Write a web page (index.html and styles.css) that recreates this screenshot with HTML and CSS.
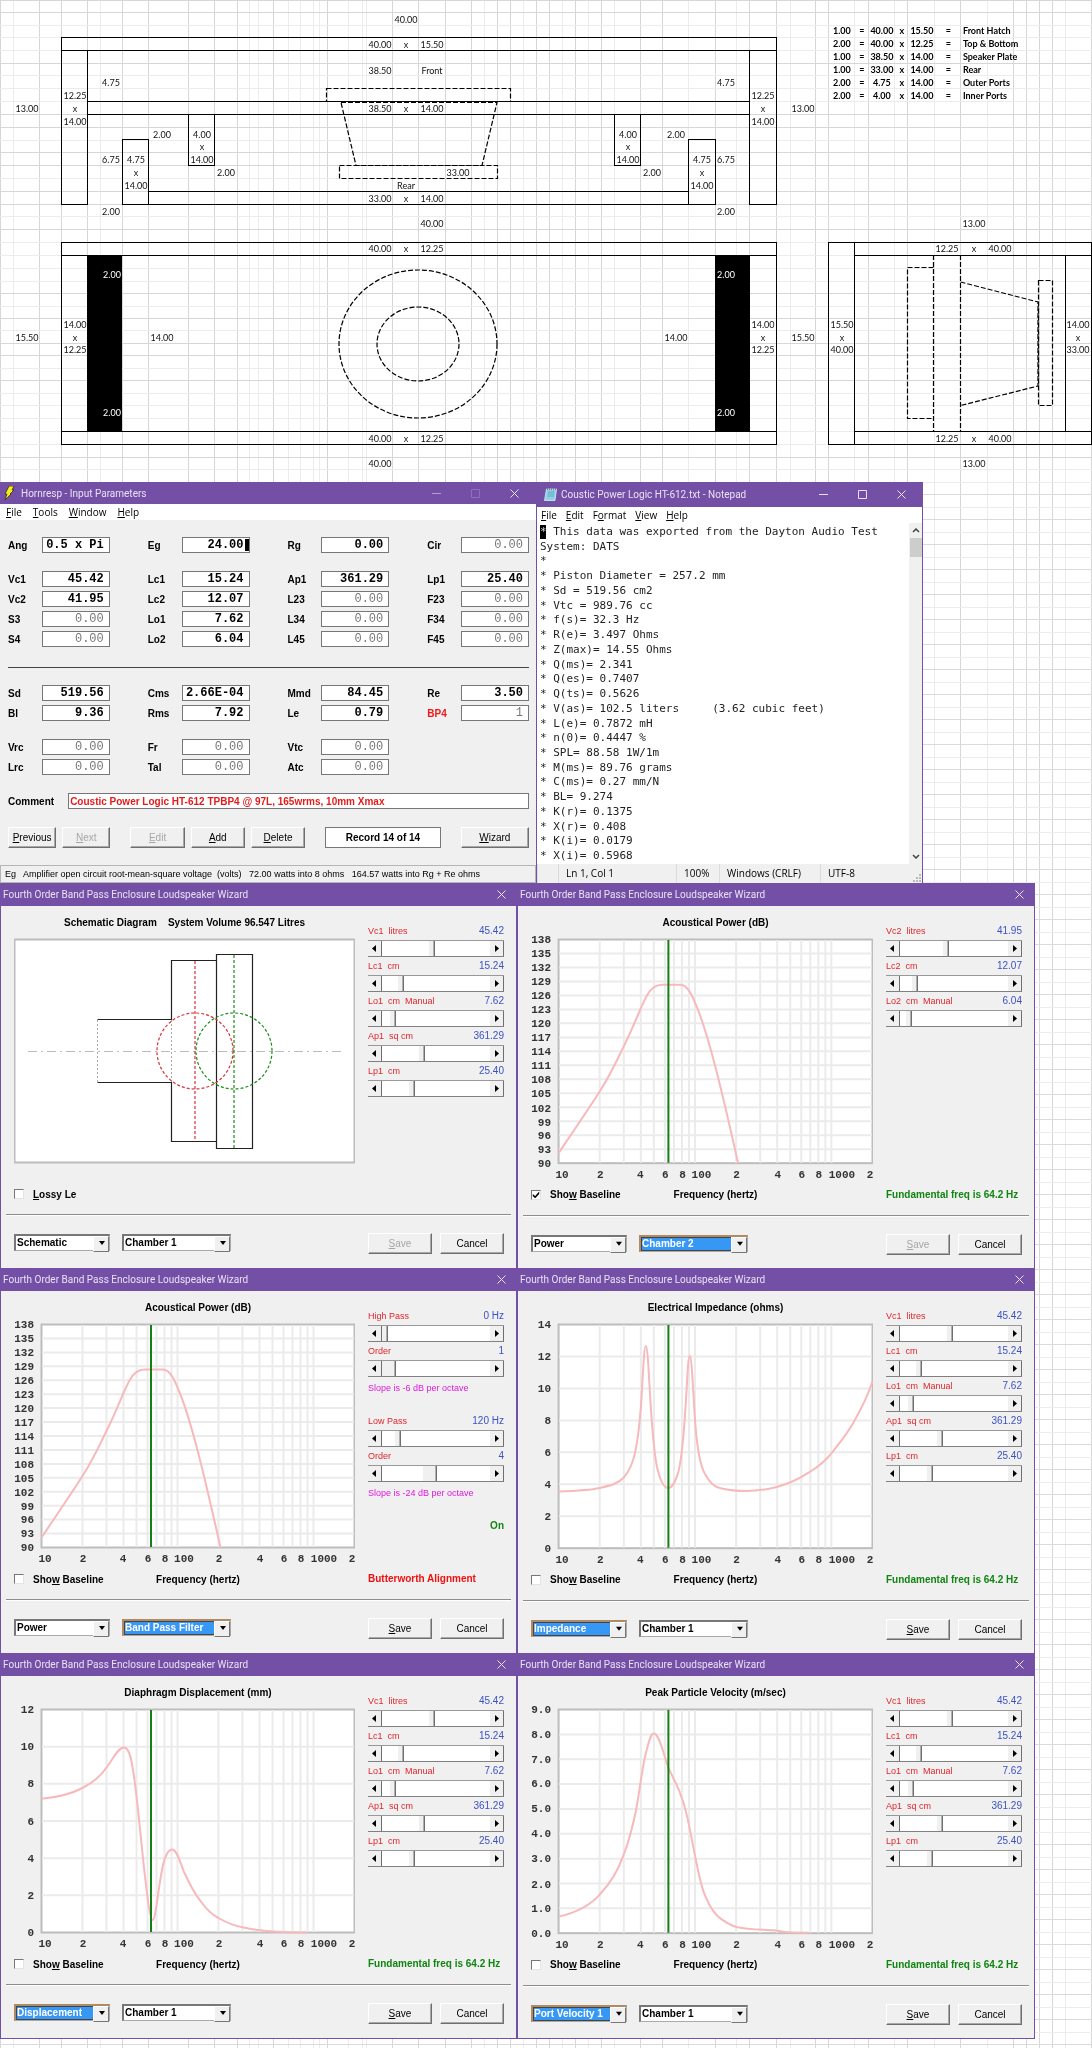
FILE: index.html
```html
<!DOCTYPE html>
<html lang="en">
<head>
<meta charset="utf-8">
<title>Coustic Power Logic HT-612 enclosure design</title>
<link rel="stylesheet" href="styles.css">
</head>
<body>
<svg class="defs" aria-hidden="true">
  <defs>
    <path id="freq-lines" d="M68.5 7V229M92.5 7V229M109.5 7V229M122.5 7V229M133.5 7V229M142.5 7V229M150.5 7V229M157.5 7V229M163.5 7V229M204.5 7V229M228.5 7V229M245.5 7V229M258.5 7V229M269.5 7V229M278.5 7V229M286.5 7V229M293.5 7V229M299.5 7V229"/>
    <path id="power-lines" d="M28 20.4H340M28 34.4H340M28 48.3H340M28 62.3H340M28 76.2H340M28 90.1H340M28 104.1H340M28 118H340M28 131.9H340M28 145.9H340M28 159.8H340M28 173.8H340M28 187.7H340M28 201.6H340M28 215.6H340"/>
    <path id="power-curve" d="M27.5 219.5C42 198 57 176 68.5 158S86 126 92.5 113S104 88 109.5 75C115 63 119 51.5 131 51.5H149C157 51.5 162 66 165 73C178 104 192 165 206.5 229.5"/>
    <symbol id="close" viewBox="0 0 9 9"><path d="M.5.5l8 8M8.5.5l-8 8" fill="none" stroke="currentColor"/></symbol>
    <symbol id="max" viewBox="0 0 9 9"><path d="M.5.5h8v8h-8z" fill="none" stroke="currentColor"/></symbol>
    <symbol id="min" viewBox="0 0 9 9"><path d="M0 4.5h9" fill="none" stroke="currentColor"/></symbol>
  </defs>
</svg>

<div class="page">
<svg class="columns" viewBox="0 0 1092 100" preserveAspectRatio="none" aria-hidden="true">
  <path class="strong" d="M.5 0V100M39.5 0V100M61.5 0V100M87.5 0V100M122.5 0V100M148.5 0V100M188.5 0V100M214.5 0V100M237.5 0V100M273.5 0V100M327.5 0V100M392.5 0V100M418.5 0V100M445.5 0V100M471.5 0V100M497.5 0V100M510.5 0V100M536.5 0V100M549.5 0V100M575.5 0V100M601.5 0V100M640.5 0V100M662.5 0V100M715.5 0V100M749.5 0V100M776.5 0V100M815.5 0V100M828.5 0V100M868.5 0V100M907.5 0V100M960.5 0V100M1013.5 0V100M1026.5 0V100M1039.5 0V100M1052.5 0V100M1091.5 0V100"/>
  <path class="weak" d="M13.5 0V100M100.5 0V100M249.5 0V100M258.5 0V100M288.5 0V100M300.5 0V100M313.5 0V100M319.5 0V100M348.5 0V100M362.5 0V100M366.5 0V100M484.5 0V100M523.5 0V100M562.5 0V100M588.5 0V100M614.5 0V100M688.5 0V100M736.5 0V100M790.5 0V100M854.5 0V100M894.5 0V100M934.5 0V100M987.5 0V100M1065.5 0V100"/>
</svg>

<section class="sheet" aria-label="Enclosure plan">
<svg class="plan" viewBox="0 0 1092 482" role="img" aria-label="Panel drawing, dimensions in inches">
  <path class="strong" d="M0 .5H1092M0 12.5H1092M0 63.5H1092M0 114.5H1092M0 127.5H1092M0 152.5H1092M0 165.5H1092M0 191.5H1092M0 204.5H1092M0 229.5H1092M0 293.5H1092M0 318.5H1092M0 343.5H1092M0 355.5H1092M0 380.5H1092M0 457.5H1092"/>
  <path class="weak" d="M0 25.5H1092M0 37.5H1092M0 50.5H1092M0 75.5H1092M0 88.5H1092M0 101.5H1092M0 140.5H1092M0 178.5H1092M0 216.5H1092M0 242.5H1092M0 255.5H1092M0 268.5H1092M0 281.5H1092M0 306.5H1092M0 330.5H1092M0 368.5H1092M0 393.5H1092M0 405.5H1092M0 418.5H1092M0 431.5H1092M0 444.5H1092M0 469.5H1092"/>

  <!-- Top view -->
  <g class="panel">
    <rect x="61.5" y="37.5" width="715" height="13"/>
    <rect x="61.5" y="50.5" width="26" height="154"/>
    <rect x="749.5" y="50.5" width="27" height="154"/>
    <rect x="87.5" y="101.5" width="662" height="13"/>
    <rect x="188.5" y="114.5" width="26" height="51"/>
    <rect x="614.5" y="114.5" width="26" height="51"/>
    <rect x="122.5" y="139.5" width="26" height="65"/>
    <rect x="688.5" y="139.5" width="27" height="65"/>
    <rect x="148.5" y="191.5" width="540" height="13"/>
  </g>
  <g class="dashed">
    <rect x="326.5" y="88.5" width="184" height="13"/>
    <path d="M341 102.5H497L482 165.5H356Z"/>
    <rect x="339.5" y="165.5" width="158" height="13"/>
  </g>
  <!-- Front view -->
  <g class="panel">
    <rect x="61.5" y="242.5" width="715" height="202"/>
    <path d="M61.5 255.5H776.5M61.5 431.5H776.5"/>
  </g>
  <path d="M87 255h35v176H87zM715 255h35v176h-35z"/>
  <g class="dashed">
    <ellipse cx="418" cy="344" rx="79" ry="74"/>
    <ellipse cx="418" cy="344" rx="41" ry="37"/>
  </g>
  <!-- Side view -->
  <g class="panel">
    <rect x="828.5" y="242.5" width="263" height="202"/>
    <path d="M854.5 242.5V444.5M854.5 255.5H1091.5M854.5 431.5H1091.5M1065.5 255.5V431.5"/>
  </g>
  <g class="dashed">
    <path d="M933.5 267.5H907.5V418.5H933.5M933.5 255V431M960.5 255V431M960.5 282L1038 302V386L960.5 405.5"/>
    <rect x="1038.5" y="280.5" width="14" height="125"/>
  </g>

  <g class="dim">
    <text x="406" y="23">40.00</text>
    <text x="380" y="48">40.00</text><text x="406" y="48">x</text><text x="432" y="48">15.50</text>
    <text x="380" y="74">38.50</text><text x="432" y="74">Front</text>
    <text x="111" y="86">4.75</text><text x="726" y="86">4.75</text>
    <text x="27" y="112">13.00</text>
    <text x="75" y="99">12.25</text><text x="75" y="112">x</text><text x="75" y="125">14.00</text>
    <text x="763" y="99">12.25</text><text x="763" y="112">x</text><text x="763" y="125">14.00</text>
    <text x="803" y="112">13.00</text>
    <text x="380" y="112">38.50</text><text x="406" y="112">x</text><text x="432" y="112">14.00</text>
    <text x="162" y="138">2.00</text><text x="676" y="138">2.00</text>
    <text x="202" y="138">4.00</text><text x="202" y="150">x</text><text x="202" y="163">14.00</text>
    <text x="628" y="138">4.00</text><text x="628" y="150">x</text><text x="628" y="163">14.00</text>
    <text x="111" y="163">6.75</text><text x="726" y="163">6.75</text>
    <text x="136" y="163">4.75</text><text x="136" y="176">x</text><text x="136" y="189">14.00</text>
    <text x="702" y="163">4.75</text><text x="702" y="176">x</text><text x="702" y="189">14.00</text>
    <text x="226" y="176">2.00</text><text x="652" y="176">2.00</text><text x="458" y="176">33.00</text>
    <text x="406" y="189">Rear</text>
    <text x="380" y="202">33.00</text><text x="406" y="202">x</text><text x="432" y="202">14.00</text>
    <text x="111" y="215">2.00</text><text x="726" y="215">2.00</text>
    <text x="432" y="227">40.00</text><text x="974" y="227">13.00</text>

    <text x="380" y="252">40.00</text><text x="406" y="252">x</text><text x="432" y="252">12.25</text>
    <text class="inv" x="112" y="278">2.00</text><text class="inv" x="726" y="278">2.00</text>
    <text class="inv" x="112" y="416">2.00</text><text class="inv" x="726" y="416">2.00</text>
    <text x="27" y="341">15.50</text><text x="162" y="341">14.00</text><text x="676" y="341">14.00</text><text x="803" y="341">15.50</text>
    <text x="75" y="328">14.00</text><text x="75" y="341">x</text><text x="75" y="353">12.25</text>
    <text x="763" y="328">14.00</text><text x="763" y="341">x</text><text x="763" y="353">12.25</text>
    <text x="380" y="442">40.00</text><text x="406" y="442">x</text><text x="432" y="442">12.25</text>
    <text x="380" y="467">40.00</text>

    <text x="947" y="252">12.25</text><text x="974" y="252">x</text><text x="1000" y="252">40.00</text>
    <text x="842" y="328">15.50</text><text x="842" y="341">x</text><text x="842" y="353">40.00</text>
    <text x="1078" y="328">14.00</text><text x="1078" y="341">x</text><text x="1078" y="353">33.00</text>
    <text x="947" y="442">12.25</text><text x="974" y="442">x</text><text x="1000" y="442">40.00</text>
    <text x="974" y="467">13.00</text>
  </g>
</svg>
<table class="cuts">
  <tr><td>1.00</td><td>=</td><td>40.00</td><td>x</td><td>15.50</td><td>=</td><th scope="row">Front Hatch</th></tr>
  <tr><td>2.00</td><td>=</td><td>40.00</td><td>x</td><td>12.25</td><td>=</td><th scope="row">Top &amp; Bottom</th></tr>
  <tr><td>1.00</td><td>=</td><td>38.50</td><td>x</td><td>14.00</td><td>=</td><th scope="row">Speaker Plate</th></tr>
  <tr><td>1.00</td><td>=</td><td>33.00</td><td>x</td><td>14.00</td><td>=</td><th scope="row">Rear</th></tr>
  <tr><td>2.00</td><td>=</td><td>4.75</td><td>x</td><td>14.00</td><td>=</td><th scope="row">Outer Ports</th></tr>
  <tr><td>2.00</td><td>=</td><td>4.00</td><td>x</td><td>14.00</td><td>=</td><th scope="row">Inner Ports</th></tr>
</table>
</section>

<div class="lower">
<div class="apps">
<section class="window" aria-label="Hornresp">
  <header class="bar main-bar">
    <svg class="bolt" viewBox="0 0 12 14" aria-hidden="true"><path d="M5 0h5L8 4h2L6 8h1L1 14 3 8H1z" fill="#f5ea1b" stroke="#2a2208" stroke-width=".7"/></svg>
    <h2>Hornresp - Input Parameters</h2>
    <div class="caption">
      <button aria-label="Minimize" class="dim-btn"><svg><use href="#min"/></svg></button>
      <button aria-label="Maximize" class="off-btn" disabled><svg><use href="#max"/></svg></button>
      <button aria-label="Close"><svg><use href="#close"/></svg></button>
    </div>
  </header>
  <nav class="menu"><a href="#"><u>F</u>ile</a><a href="#"><u>T</u>ools</a><a href="#"><u>W</u>indow</a><a href="#"><u>H</u>elp</a></nav>
  <form class="params">
    <div class="fields">
      <label>Ang<input value="0.5 x Pi"></label><label class="caret">Eg<input value="24.00"></label><label>Rg<input value="0.00"></label><label>Cir<input value="0.00" disabled></label>
    </div>
    <div class="fields">
      <label>Vc1<input value="45.42"></label><label>Lc1<input value="15.24"></label><label>Ap1<input value="361.29"></label><label>Lp1<input value="25.40"></label>
      <label>Vc2<input value="41.95"></label><label>Lc2<input value="12.07"></label><label>L23<input value="0.00" disabled></label><label>F23<input value="0.00" disabled></label>
      <label>S3<input value="0.00" disabled></label><label>Lo1<input value="7.62"></label><label>L34<input value="0.00" disabled></label><label>F34<input value="0.00" disabled></label>
      <label>S4<input value="0.00" disabled></label><label>Lo2<input value="6.04"></label><label>L45<input value="0.00" disabled></label><label>F45<input value="0.00" disabled></label>
    </div>
    <hr>
    <div class="fields">
      <label>Sd<input value="519.56"></label><label>Cms<input value="2.66E-04"></label><label>Mmd<input value="84.45"></label><label>Re<input value="3.50"></label>
      <label>Bl<input value="9.36"></label><label>Rms<input value="7.92"></label><label>Le<input value="0.79"></label><label class="red">BP4<input value="1" disabled></label>
    </div>
    <div class="fields">
      <label>Vrc<input value="0.00" disabled></label><label>Fr<input value="0.00" disabled></label><label>Vtc<input value="0.00" disabled></label><span></span>
      <label>Lrc<input value="0.00" disabled></label><label>Tal<input value="0.00" disabled></label><label>Atc<input value="0.00" disabled></label>
    </div>
    <label class="comment">Comment<input value="Coustic Power Logic HT-612 TPBP4 @ 97L, 165wrms, 10mm Xmax"></label>
    <div class="records">
      <button class="btn" type="button"><u>P</u>revious</button>
      <button class="btn" type="button" disabled><u>N</u>ext</button>
      <span></span>
      <button class="btn" type="button" disabled><u>E</u>dit</button>
      <button class="btn" type="button"><u>A</u>dd</button>
      <button class="btn" type="button"><u>D</u>elete</button>
      <span></span>
      <output>Record 14 of 14</output>
      <span></span>
      <button class="btn" type="button"><u>W</u>izard</button>
    </div>
  </form>
  <footer class="hint">Eg&nbsp;&nbsp; Amplifier open circuit root-mean-square voltage&nbsp; (volts)&nbsp;&nbsp; 72.00 watts into 8 ohms&nbsp;&nbsp; 164.57 watts into Rg + Re ohms</footer>
</section>

<section class="window notepad" aria-label="Notepad">
  <header class="bar tall">
    <svg class="pad" viewBox="0 0 13 13" aria-hidden="true"><path d="M2.500 1h10L11 12.500H.5z" fill="#8fd0e4" stroke="#d9eef5" stroke-width=".8"/><path d="M4 4h6.500M3.700 6h6.500M3.400 8h6.500" stroke="#4b9cba" stroke-width=".7"/><path d="M3 1.200h9" stroke="#555" stroke-dasharray="1 1"/></svg>
    <h2>Coustic Power Logic HT-612.txt - Notepad</h2>
    <div class="caption">
      <button aria-label="Minimize"><svg><use href="#min"/></svg></button>
      <button aria-label="Maximize"><svg><use href="#max"/></svg></button>
      <button aria-label="Close"><svg><use href="#close"/></svg></button>
    </div>
  </header>
  <nav class="menu"><a href="#"><u>F</u>ile</a><a href="#"><u>E</u>dit</a><a href="#">F<u>o</u>rmat</a><a href="#"><u>V</u>iew</a><a href="#"><u>H</u>elp</a></nav>
  <div class="editor">
    <textarea aria-label="Text" spellcheck="false">* This data was exported from the Dayton Audio Test
System: DATS
*
* Piston Diameter = 257.2 mm
* Sd = 519.56 cm2
* Vtc = 989.76 cc
* f(s)= 32.3 Hz
* R(e)= 3.497 Ohms
* Z(max)= 14.55 Ohms
* Q(ms)= 2.341
* Q(es)= 0.7407
* Q(ts)= 0.5626
* V(as)= 102.5 liters     (3.62 cubic feet)
* L(e)= 0.7872 mH
* n(0)= 0.4447 %
* SPL= 88.58 1W/1m
* M(ms)= 89.76 grams
* C(ms)= 0.27 mm/N
* BL= 9.274
* K(r)= 0.1375
* X(r)= 0.408
* K(i)= 0.0179
* X(i)= 0.5968</textarea>
    <span class="cursor"></span>
    <div class="scroll">
      <svg viewBox="0 0 8 5"><path d="M1 4l3-3 3 3" fill="none" stroke="#444" stroke-width="1.500"/></svg>
      <i></i>
      <svg viewBox="0 0 8 5"><path d="M1 1l3 3 3-3" fill="none" stroke="#444" stroke-width="1.500"/></svg>
    </div>
  </div>
  <footer class="status"><span></span><span>Ln 1, Col 1</span><span>100%</span><span>Windows (CRLF)</span><span>UTF-8</span>
    <svg class="grip" viewBox="0 0 8 8" aria-hidden="true"><path d="M6 0h2v2H6zM3 3h2v2H3zM6 3h2v2H6zM0 6h2v2H0zM3 6h2v2H3zM6 6h2v2H6z" fill="#bbb"/></svg>
  </footer>
</section>
</div>

<div class="wizards">

<section class="window wizard" aria-label="Schematic">
  <header class="bar"><h2>Fourth Order Band Pass Enclosure Loudspeaker Wizard</h2><div class="caption"><button aria-label="Close"><svg><use href="#close"/></svg></button></div></header>
  <form class="panel-body">
    <div class="main">
      <h3 class="wide">Schematic Diagram &nbsp; &nbsp;System Volume 96.547 Litres</h3>
      <svg class="chart" viewBox="0 0 341 248" role="img" aria-label="Enclosure schematic">
        <rect class="frame" x="0.500" y="6.500" width="340" height="223"/>
        <path d="M14 118.500H328" fill="none" stroke="#bbb" stroke-dasharray="9 4 2 4"/>
        <path d="M83.500 87V149M157.500 87V149" stroke="#aaa" stroke-dasharray="2 2"/>
        <path d="M83.500 86.500H157.500V27.500H202.500M83.500 149.500H157.500V208.500H202.500M202.500 21.500H238.500V215.500H202.500Z" fill="none" stroke="#222" stroke-width="1.200"/>
        <g fill="none" stroke="#d9303a" stroke-width="1.200" stroke-dasharray="3 2"><path d="M181 28V208"/><circle cx="181" cy="118" r="38"/></g>
        <g fill="none" stroke="#1a8c1a" stroke-width="1.200" stroke-dasharray="3 2"><path d="M220 22V215"/><circle cx="220" cy="118" r="38"/></g>
      </svg>
    </div>
    <div class="side">
      <label><span>Vc1&nbsp; litres</span><b>45.42</b></label><div class="slide"><button type="button" aria-label="Less"></button><input type="range" aria-label="Vc1" value="46"><button type="button" aria-label="More"></button></div>
      <label><span>Lc1&nbsp; cm</span><b>15.24</b></label><div class="slide"><button type="button" aria-label="Less"></button><input type="range" aria-label="Lc1" value="16"><button type="button" aria-label="More"></button></div>
      <label><span>Lo1&nbsp; cm&nbsp; Manual</span><b>7.62</b></label><div class="slide"><button type="button" aria-label="Less"></button><input type="range" aria-label="Lo1" value="8"><button type="button" aria-label="More"></button></div>
      <label><span>Ap1&nbsp; sq cm</span><b>361.29</b></label><div class="slide"><button type="button" aria-label="Less"></button><input type="range" aria-label="Ap1" value="36"><button type="button" aria-label="More"></button></div>
      <label><span>Lp1&nbsp; cm</span><b>25.40</b></label><div class="slide"><button type="button" aria-label="Less"></button><input type="range" aria-label="Lp1" value="26"><button type="button" aria-label="More"></button></div>
    </div>
    <div class="under"><label><input type="checkbox"><span><u>L</u>ossy Le</span></label></div>
    <p class="note"></p>
    <hr>
    <div class="picks">
      <span class="combo"><select aria-label="View"><option>Schematic</option></select></span>
      <span class="combo long"><select aria-label="Section"><option>Chamber 1</option></select></span>
    </div>
    <div class="acts"><button class="btn" type="button" disabled><u>S</u>ave</button><button class="btn" type="button">Cancel</button></div>
  </form>
</section>

<section class="window wizard" aria-label="Acoustical power, chamber 2">
  <header class="bar"><h2>Fourth Order Band Pass Enclosure Loudspeaker Wizard</h2><div class="caption"><button aria-label="Close"><svg><use href="#close"/></svg></button></div></header>
  <form class="panel-body">
    <div class="main">
      <h3>Acoustical Power (dB)</h3>
      <svg class="chart" viewBox="0 0 341 248" role="img" aria-label="Acoustical power">
        <rect class="frame" x="27.500" y="6.500" width="313" height="223"/>
        <g class="lines"><use href="#freq-lines"/><use href="#power-lines"/></g>
        <use class="curve" href="#power-curve"/>
        <path class="mark" d="M137 7V229"/>
        <g class="ylab"><text x="20" y="10">138</text><text x="20" y="24">135</text><text x="20" y="38">132</text><text x="20" y="52">129</text><text x="20" y="66">126</text><text x="20" y="80">123</text><text x="20" y="94">120</text><text x="20" y="108">117</text><text x="20" y="122">114</text><text x="20" y="136">111</text><text x="20" y="150">108</text><text x="20" y="164">105</text><text x="20" y="178">102</text><text x="20" y="192">99</text><text x="20" y="205">96</text><text x="20" y="219">93</text><text x="20" y="233">90</text></g>
        <g class="xlab"><text x="31" y="244">10</text><text x="69" y="244">2</text><text x="109" y="244">4</text><text x="134" y="244">6</text><text x="151" y="244">8</text><text x="170" y="244">100</text><text x="205" y="244">2</text><text x="246" y="244">4</text><text x="270" y="244">6</text><text x="287" y="244">8</text><text x="310" y="244">1000</text><text x="338" y="244">2</text></g>
      </svg>
    </div>
    <div class="side">
      <label><span>Vc2&nbsp; litres</span><b>41.95</b></label><div class="slide"><button type="button" aria-label="Less"></button><input type="range" aria-label="Vc2" value="42"><button type="button" aria-label="More"></button></div>
      <label><span>Lc2&nbsp; cm</span><b>12.07</b></label><div class="slide"><button type="button" aria-label="Less"></button><input type="range" aria-label="Lc2" value="12"><button type="button" aria-label="More"></button></div>
      <label><span>Lo2&nbsp; cm&nbsp; Manual</span><b>6.04</b></label><div class="slide"><button type="button" aria-label="Less"></button><input type="range" aria-label="Lo2" value="6"><button type="button" aria-label="More"></button></div>
    </div>
    <div class="under"><label><input type="checkbox" checked><span>Sho<u>w</u> Baseline</span></label><strong>Frequency (hertz)</strong></div>
    <p class="note">Fundamental freq is 64.2 Hz</p>
    <hr>
    <div class="picks">
      <span class="combo"><select aria-label="View"><option>Power</option></select></span>
      <span class="combo long on"><select aria-label="Section"><option>Chamber 2</option></select></span>
    </div>
    <div class="acts"><button class="btn" type="button" disabled><u>S</u>ave</button><button class="btn" type="button">Cancel</button></div>
  </form>
</section>

<section class="window wizard" aria-label="Acoustical power, band pass filter">
  <header class="bar"><h2>Fourth Order Band Pass Enclosure Loudspeaker Wizard</h2><div class="caption"><button aria-label="Close"><svg><use href="#close"/></svg></button></div></header>
  <form class="panel-body">
    <div class="main">
      <h3>Acoustical Power (dB)</h3>
      <svg class="chart" viewBox="0 0 341 248" role="img" aria-label="Acoustical power with filter">
        <rect class="frame" x="27.500" y="6.500" width="313" height="223"/>
        <g class="lines"><use href="#freq-lines"/><use href="#power-lines"/></g>
        <use class="curve" href="#power-curve"/>
        <path class="mark" d="M137 7V229"/>
        <g class="ylab"><text x="20" y="10">138</text><text x="20" y="24">135</text><text x="20" y="38">132</text><text x="20" y="52">129</text><text x="20" y="66">126</text><text x="20" y="80">123</text><text x="20" y="94">120</text><text x="20" y="108">117</text><text x="20" y="122">114</text><text x="20" y="136">111</text><text x="20" y="150">108</text><text x="20" y="164">105</text><text x="20" y="178">102</text><text x="20" y="192">99</text><text x="20" y="205">96</text><text x="20" y="219">93</text><text x="20" y="233">90</text></g>
        <g class="xlab"><text x="31" y="244">10</text><text x="69" y="244">2</text><text x="109" y="244">4</text><text x="134" y="244">6</text><text x="151" y="244">8</text><text x="170" y="244">100</text><text x="205" y="244">2</text><text x="246" y="244">4</text><text x="270" y="244">6</text><text x="287" y="244">8</text><text x="310" y="244">1000</text><text x="338" y="244">2</text></g>
      </svg>
    </div>
    <div class="side">
      <label><span>High Pass</span><b>0 Hz</b></label><div class="slide"><button type="button" aria-label="Less"></button><input type="range" aria-label="High pass" value="0"><button type="button" aria-label="More"></button></div>
      <label><span>Order</span><b>1</b></label><div class="slide"><button type="button" aria-label="Less"></button><input class="fat" type="range" aria-label="High pass order" value="0"><button type="button" aria-label="More"></button></div>
      <p class="slope">Slope is -6 dB per octave</p>
      <label><span>Low Pass</span><b>120 Hz</b></label><div class="slide"><button type="button" aria-label="Less"></button><input type="range" aria-label="Low pass" value="13"><button type="button" aria-label="More"></button></div>
      <label><span>Order</span><b>4</b></label><div class="slide"><button type="button" aria-label="Less"></button><input class="fat" type="range" aria-label="Low pass order" value="44"><button type="button" aria-label="More"></button></div>
      <p class="slope">Slope is -24 dB per octave</p>
      <p class="state">On</p>
    </div>
    <div class="under"><label><input type="checkbox"><span>Sho<u>w</u> Baseline</span></label><strong>Frequency (hertz)</strong></div>
    <p class="note alert">Butterworth Alignment</p>
    <hr>
    <div class="picks">
      <span class="combo"><select aria-label="View"><option>Power</option></select></span>
      <span class="combo long on"><select aria-label="Section"><option>Band Pass Filter</option></select></span>
    </div>
    <div class="acts"><button class="btn" type="button"><u>S</u>ave</button><button class="btn" type="button">Cancel</button></div>
  </form>
</section>

<section class="window wizard" aria-label="Electrical impedance">
  <header class="bar"><h2>Fourth Order Band Pass Enclosure Loudspeaker Wizard</h2><div class="caption"><button aria-label="Close"><svg><use href="#close"/></svg></button></div></header>
  <form class="panel-body">
    <div class="main">
      <h3>Electrical Impedance (ohms)</h3>
      <svg class="chart" viewBox="0 0 341 248" role="img" aria-label="Electrical impedance">
        <rect class="frame" x="27.500" y="6.500" width="313" height="223"/>
        <g class="lines"><use href="#freq-lines"/><path d="M28 38.400H340M28 70.200H340M28 102.100H340M28 133.900H340M28 165.800H340M28 197.600H340"/></g>
        <path class="curve" d="M27.500 173C42 172.500 57 172 68.500 169.500C80 167 87 165 92.500 159C98 153 101 146 103.600 135C107 120 108 108 109.500 90C111.500 60 112.500 28 114.500 28C116.500 28 117.500 60 119.400 88C121 112 123 136 125.600 148.500C129 163 133 169.500 137 169.500C141 169.500 145 160 147 153C151 138 152.500 113 154 90C156 60 156.500 38 158.300 38C160.500 38 161.500 75 164 108C166 132 169 148 173.500 155.500C178 164 182 168 190 170C198 172 206 172.500 215.500 172.500C226 172.500 235 171 245 168.500C259 165 268 160 278 153.500C287 148 294 142 300 134.500C309 123 315 116 322 103.500C330 89 336 78 340.500 63"/>
        <path class="mark" d="M137 7V229"/>
        <g class="ylab"><text x="20" y="10">14</text><text x="20" y="42">12</text><text x="20" y="74">10</text><text x="20" y="106">8</text><text x="20" y="138">6</text><text x="20" y="170">4</text><text x="20" y="201">2</text><text x="20" y="233">0</text></g>
        <g class="xlab"><text x="31" y="244">10</text><text x="69" y="244">2</text><text x="109" y="244">4</text><text x="134" y="244">6</text><text x="151" y="244">8</text><text x="170" y="244">100</text><text x="205" y="244">2</text><text x="246" y="244">4</text><text x="270" y="244">6</text><text x="287" y="244">8</text><text x="310" y="244">1000</text><text x="338" y="244">2</text></g>
      </svg>
    </div>
    <div class="side">
      <label><span>Vc1&nbsp; litres</span><b>45.42</b></label><div class="slide"><button type="button" aria-label="Less"></button><input type="range" aria-label="Vc1" value="46"><button type="button" aria-label="More"></button></div>
      <label><span>Lc1&nbsp; cm</span><b>15.24</b></label><div class="slide"><button type="button" aria-label="Less"></button><input type="range" aria-label="Lc1" value="16"><button type="button" aria-label="More"></button></div>
      <label><span>Lo1&nbsp; cm&nbsp; Manual</span><b>7.62</b></label><div class="slide"><button type="button" aria-label="Less"></button><input type="range" aria-label="Lo1" value="8"><button type="button" aria-label="More"></button></div>
      <label><span>Ap1&nbsp; sq cm</span><b>361.29</b></label><div class="slide"><button type="button" aria-label="Less"></button><input type="range" aria-label="Ap1" value="36"><button type="button" aria-label="More"></button></div>
      <label><span>Lp1&nbsp; cm</span><b>25.40</b></label><div class="slide"><button type="button" aria-label="Less"></button><input type="range" aria-label="Lp1" value="26"><button type="button" aria-label="More"></button></div>
    </div>
    <div class="under"><label><input type="checkbox"><span>Sho<u>w</u> Baseline</span></label><strong>Frequency (hertz)</strong></div>
    <p class="note">Fundamental freq is 64.2 Hz</p>
    <hr>
    <div class="picks">
      <span class="combo on"><select aria-label="View"><option>Impedance</option></select></span>
      <span class="combo long"><select aria-label="Section"><option>Chamber 1</option></select></span>
    </div>
    <div class="acts"><button class="btn" type="button"><u>S</u>ave</button><button class="btn" type="button">Cancel</button></div>
  </form>
</section>

<section class="window wizard" aria-label="Diaphragm displacement">
  <header class="bar"><h2>Fourth Order Band Pass Enclosure Loudspeaker Wizard</h2><div class="caption"><button aria-label="Close"><svg><use href="#close"/></svg></button></div></header>
  <form class="panel-body">
    <div class="main">
      <h3>Diaphragm Displacement (mm)</h3>
      <svg class="chart" viewBox="0 0 341 248" role="img" aria-label="Diaphragm displacement">
        <rect class="frame" x="27.500" y="6.500" width="313" height="223"/>
        <g class="lines"><use href="#freq-lines"/><path d="M28 43.700H340M28 80.800H340M28 118H340M28 155.200H340M28 192.300H340"/></g>
        <path class="curve" d="M27.500 95.800C42 94.500 57 91 68.500 85C80 79 87 73 92.500 64.500C99 56 104 44.500 110 44.500C116 44.500 118 60 119.600 71C123 92 126 128 129.600 161C133 192 136 217 138.600 217C142 217 144 184 149 162C152 150 155 146.500 158 146.500C163 146.500 166 159 169.600 168C175 180 180 190 186.500 198C192 206 197 211 204.500 215C213 220 221 223 229.500 224.500C238 226.500 246 227.500 253 228C268 229 280 229.500 293 229.500"/>
        <path class="mark" d="M137 7V229"/>
        <g class="ylab"><text x="20" y="10">12</text><text x="20" y="47">10</text><text x="20" y="84">8</text><text x="20" y="122">6</text><text x="20" y="159">4</text><text x="20" y="196">2</text><text x="20" y="233">0</text></g>
        <g class="xlab"><text x="31" y="244">10</text><text x="69" y="244">2</text><text x="109" y="244">4</text><text x="134" y="244">6</text><text x="151" y="244">8</text><text x="170" y="244">100</text><text x="205" y="244">2</text><text x="246" y="244">4</text><text x="270" y="244">6</text><text x="287" y="244">8</text><text x="310" y="244">1000</text><text x="338" y="244">2</text></g>
      </svg>
    </div>
    <div class="side">
      <label><span>Vc1&nbsp; litres</span><b>45.42</b></label><div class="slide"><button type="button" aria-label="Less"></button><input type="range" aria-label="Vc1" value="46"><button type="button" aria-label="More"></button></div>
      <label><span>Lc1&nbsp; cm</span><b>15.24</b></label><div class="slide"><button type="button" aria-label="Less"></button><input type="range" aria-label="Lc1" value="16"><button type="button" aria-label="More"></button></div>
      <label><span>Lo1&nbsp; cm&nbsp; Manual</span><b>7.62</b></label><div class="slide"><button type="button" aria-label="Less"></button><input type="range" aria-label="Lo1" value="8"><button type="button" aria-label="More"></button></div>
      <label><span>Ap1&nbsp; sq cm</span><b>361.29</b></label><div class="slide"><button type="button" aria-label="Less"></button><input type="range" aria-label="Ap1" value="36"><button type="button" aria-label="More"></button></div>
      <label><span>Lp1&nbsp; cm</span><b>25.40</b></label><div class="slide"><button type="button" aria-label="Less"></button><input type="range" aria-label="Lp1" value="26"><button type="button" aria-label="More"></button></div>
    </div>
    <div class="under"><label><input type="checkbox"><span>Sho<u>w</u> Baseline</span></label><strong>Frequency (hertz)</strong></div>
    <p class="note">Fundamental freq is 64.2 Hz</p>
    <hr>
    <div class="picks">
      <span class="combo on"><select aria-label="View"><option>Displacement</option></select></span>
      <span class="combo long"><select aria-label="Section"><option>Chamber 1</option></select></span>
    </div>
    <div class="acts"><button class="btn" type="button"><u>S</u>ave</button><button class="btn" type="button">Cancel</button></div>
  </form>
</section>

<section class="window wizard" aria-label="Peak particle velocity">
  <header class="bar"><h2>Fourth Order Band Pass Enclosure Loudspeaker Wizard</h2><div class="caption"><button aria-label="Close"><svg><use href="#close"/></svg></button></div></header>
  <form class="panel-body">
    <div class="main">
      <h3>Peak Particle Velocity (m/sec)</h3>
      <svg class="chart" viewBox="0 0 341 248" role="img" aria-label="Peak particle velocity">
        <rect class="frame" x="27.500" y="6.500" width="313" height="223"/>
        <g class="lines"><use href="#freq-lines"/><path d="M28 31.300H340M28 56.100H340M28 80.800H340M28 105.600H340M28 130.400H340M28 155.200H340M28 179.900H340M28 204.700H340"/></g>
        <path class="curve" d="M28 213C44 209 58 203 68.500 191C80 179 87 167 92.500 151C98 137 101 125 104.500 108C108 90 110 71 113.500 54.500C117 40 119 30.500 122.500 30.500C128 30.500 133 54 137 64.500C141 74 145 80 148.500 89.500C152 98 154 105 156 114.500C159 128 161 140 164 154.500C167 170 170 184 174 193C179 205 184 212 190.500 216C195 219 200 222.500 205.500 223.500C216 226 230 226 242 226.500C248 227 251 228.500 257 228.700C264 229 270 229 277 229"/>
        <path class="mark" d="M137 7V229"/>
        <g class="ylab"><text x="20" y="10">9.0</text><text x="20" y="35">8.0</text><text x="20" y="60">7.0</text><text x="20" y="84">6.0</text><text x="20" y="109">5.0</text><text x="20" y="134">4.0</text><text x="20" y="159">3.0</text><text x="20" y="184">2.0</text><text x="20" y="208">1.0</text><text x="20" y="233">0.0</text></g>
        <g class="xlab"><text x="31" y="244">10</text><text x="69" y="244">2</text><text x="109" y="244">4</text><text x="134" y="244">6</text><text x="151" y="244">8</text><text x="170" y="244">100</text><text x="205" y="244">2</text><text x="246" y="244">4</text><text x="270" y="244">6</text><text x="287" y="244">8</text><text x="310" y="244">1000</text><text x="338" y="244">2</text></g>
      </svg>
    </div>
    <div class="side">
      <label><span>Vc1&nbsp; litres</span><b>45.42</b></label><div class="slide"><button type="button" aria-label="Less"></button><input type="range" aria-label="Vc1" value="46"><button type="button" aria-label="More"></button></div>
      <label><span>Lc1&nbsp; cm</span><b>15.24</b></label><div class="slide"><button type="button" aria-label="Less"></button><input type="range" aria-label="Lc1" value="16"><button type="button" aria-label="More"></button></div>
      <label><span>Lo1&nbsp; cm&nbsp; Manual</span><b>7.62</b></label><div class="slide"><button type="button" aria-label="Less"></button><input type="range" aria-label="Lo1" value="8"><button type="button" aria-label="More"></button></div>
      <label><span>Ap1&nbsp; sq cm</span><b>361.29</b></label><div class="slide"><button type="button" aria-label="Less"></button><input type="range" aria-label="Ap1" value="36"><button type="button" aria-label="More"></button></div>
      <label><span>Lp1&nbsp; cm</span><b>25.40</b></label><div class="slide"><button type="button" aria-label="Less"></button><input type="range" aria-label="Lp1" value="26"><button type="button" aria-label="More"></button></div>
    </div>
    <div class="under"><label><input type="checkbox"><span>Sho<u>w</u> Baseline</span></label><strong>Frequency (hertz)</strong></div>
    <p class="note">Fundamental freq is 64.2 Hz</p>
    <hr>
    <div class="picks">
      <span class="combo on"><select aria-label="View"><option>Port Velocity 1</option></select></span>
      <span class="combo long"><select aria-label="Section"><option>Chamber 1</option></select></span>
    </div>
    <div class="acts"><button class="btn" type="button"><u>S</u>ave</button><button class="btn" type="button">Cancel</button></div>
  </form>
</section>

</div>
</div>
</div>
</body>
</html>
```
FILE: styles.css
```css
* { box-sizing: border-box; }
body {
  margin: 0;
  background: #fff;
  color: #000;
  font-family: "Liberation Sans", sans-serif;
  font-size: 10px;
}
h2, h3, p, hr { margin: 0; }
h2, h3 { font-size: 10px; }
a { color: inherit; text-decoration: none; }
button, input, select, textarea { font: inherit; color: inherit; margin: 0; border-radius: 0; }
.defs { position: absolute; width: 0; height: 0; }

/* Spreadsheet behind everything */
.page { position: relative; min-height: 100vh; display: flex; flex-direction: column; }
.columns { position: absolute; inset: 0; width: 100%; height: 100%; }
.strong, .weak { fill: none; stroke: #d6d6d6; }
.weak { stroke: #ececec; }
.sheet { position: relative; font-family: Lato, "Open Sans", sans-serif; font-size: 9px; }
.plan { display: block; width: 100%; height: auto; }
.plan .panel { fill: none; stroke: #000; stroke-width: 1; }
.dashed { fill: none; stroke: #000; stroke-width: 1.2; stroke-dasharray: 5 2; }
.dim { text-anchor: middle; fill: #111; }
.dim .inv { fill: #fff; }
.cuts { position: absolute; left: 76%; top: 5%; border-collapse: collapse; font-weight: bold; }
.cuts td, .cuts th { height: 13px; padding: 0; line-height: 13px; text-align: center; white-space: nowrap; }
.cuts td { width: 16px; }
.cuts td:nth-child(odd) { width: 24px; }
.cuts td:nth-child(6) { width: 29px; }
.cuts th { text-align: left; }

.lower {
  position: relative;
  flex: 1;
  background:
    linear-gradient(#ececec 1px, transparent 1px) 0 0 / 100% 25px,
    linear-gradient(#dadada 1px, transparent 1px) 0 12px / 100% 25px;
}
.apps { display: grid; grid-template-columns: minmax(0, 537fr) minmax(0, 386fr) 169fr; }
.wizards { display: grid; grid-template-columns: minmax(0, 517fr) minmax(0, 518fr) 57fr; }
.wizards .wizard:nth-child(odd) { grid-column: 1; }

/* Windows */
.window { background: #f0f0f0; border: solid #744fa6; border-width: 0 1px 0 0; display: flex; flex-direction: column; }
.wizard { border-width: 0 1px; }
.wizard:nth-last-child(-n+2) { border-bottom-width: 1px; }
.bar { display: flex; align-items: center; height: 22px; padding: 0 10px 0 4px; background: #744fa6; color: #e9e2f4; font-family: Roboto, "Open Sans", sans-serif; }
.wizard .bar { height: 23px; padding-left: 2px; }
.bar.main-bar { padding-right: 17px; }
.bar.tall { height: 25px; padding: 0 16px 0 7px; }
.bar h2 { flex: 1; font-weight: normal; font-size: 10px; white-space: nowrap; }
.bolt { width: 12px; height: 14px; margin-right: 5px; }
.pad { width: 13px; height: 13px; margin-right: 4px; }
.caption { display: flex; gap: 30px; }
.caption button { display: flex; padding: 0; border: 0; background: none; color: #e9e2f4; }
.caption svg { width: 9px; height: 9px; display: block; }
.caption .dim-btn { color: #b49fd0; }
.caption .off-btn { color: #9070ba; }
.menu { display: flex; gap: 11px; height: 16px; padding: 0 6px; background: #fff; font-family: "Open Sans", sans-serif; line-height: 16px; }
.notepad .menu { gap: 9px; padding: 0 4px; }

.btn {
  height: 21px;
  padding: 0;
  border: 1px solid;
  border-color: #fff #6f6f6f #6f6f6f #fff;
  box-shadow: inset -1px -1px #a8a8a8;
  background: #f0f0f0;
  font-size: 10px;
  font-weight: normal;
}
.btn:disabled { color: #a6a6a6; }

/* Hornresp parameters */
.params { padding: 17px 7px 17px 8px; font-weight: bold; }
.fields { display: grid; grid-template-columns: repeat(4, 1fr); gap: 4px 38px; margin-bottom: 18px; }
.fields label { position: relative; display: flex; align-items: center; justify-content: space-between; height: 16px; }
.fields input { width: 68px; height: 16px; padding: 0 5px 0 0; border: 1px solid #777; background: #fff; color: #000; font: bold 12px "Liberation Mono", monospace; text-align: right; }
.fields input:disabled { color: #777; font-weight: normal; }
.caret::after { content: ""; position: absolute; right: 1px; top: 2px; width: 4px; height: 12px; background: #000; }
.red { color: #f01818; }
.params hr { border: 0; border-top: 1px solid #444; margin: 20px 0 17px; }
.comment { display: flex; align-items: center; gap: 14px; height: 16px; }
.comment input { flex: 1; min-width: 0; height: 16px; padding: 0 1px; border: 1px solid #777; background: #fff; color: #e21c1c; }
.records { display: grid; grid-template-columns: 48fr 48fr 8fr 54fr 54fr 54fr 8fr 115fr 8fr 68fr; gap: 6px; margin-top: 18px; }
.records output { border: 1px solid #777; background: #fff; text-align: center; line-height: 19px; }
.hint { height: 18px; padding: 0 4px; border: 1px solid #b5b5b5; font-size: 9px; line-height: 16px; white-space: nowrap; overflow: hidden; }

/* Notepad */
.editor { position: relative; flex: 1; display: flex; background: #fff; }
.editor textarea { flex: 1; min-width: 0; padding: 2px 0 0 3px; border: 0; outline: 0; resize: none; overflow: hidden; background: #fff; color: #222; font-family: "DejaVu Sans Mono", monospace; font-size: 11px; line-height: 1.34; }
.cursor { position: absolute; left: 3px; top: 2px; width: 6px; height: 14px; background: #fff; mix-blend-mode: difference; }
.scroll { width: 13px; display: flex; flex-direction: column; align-items: center; padding: 5px 0; background: #f0f0f0; }
.scroll svg { width: 8px; height: 5px; }
.scroll i { width: 12px; height: 19px; margin: 5px 0 auto; background: #cdcdcd; }
.status { display: grid; grid-template-columns: 21px 118px 43px 101px 1fr 8px; height: 19px; padding-right: 1px; font: 10px/18px "Open Sans", sans-serif; }
.status span { padding-left: 7px; border-left: 1px solid #dcdcdc; white-space: nowrap; }
.grip { width: 8px; height: 8px; align-self: end; margin-bottom: 1px; }

/* Wizards */
.panel-body { display: grid; align-content: start; grid-template-columns: minmax(0, 1fr) 136px; column-gap: 13px; padding: 6px 12px 13px 13px; }
.wizard .panel-body { min-height: 362px; }
.main h3 { height: 21px; padding-left: 27px; line-height: 21px; text-align: center; }
.main .wide { padding-left: 0; }
.chart { display: block; width: 100%; height: auto; }
.frame { fill: #fff; stroke: #bdbdbd; stroke-width: 2; }
.lines { fill: none; stroke: #ebebeb; stroke-width: 2; }
.curve { fill: none; stroke: #f7b9bb; stroke-width: 2; }
.mark { fill: none; stroke: #128012; stroke-width: 2; }
.ylab, .xlab { font: bold 11px "Liberation Mono", monospace; fill: #333; text-anchor: middle; }
.ylab { text-anchor: end; }
.side { padding-top: 10px; font-size: 9px; }
.side label { display: flex; justify-content: space-between; height: 18px; line-height: 18px; color: #e0262c; }
.side b { font-weight: normal; font-size: 10px; color: #3a52c4; }
.slide { display: flex; height: 17px; border-top: 1px solid #999; border-bottom: 1px solid #808080; background: #fff; }
.slide button { position: relative; width: 14px; padding: 0; border: 0; border-right: 1px solid #6f6f6f; background: #f0f0f0; }
.slide button::after { content: ""; position: absolute; left: 4px; top: 4px; width: 4px; height: 7px; background: #000; clip-path: polygon(0 50%, 100% 0, 100% 100%); }
.slide button:last-child::after { left: 5px; clip-path: polygon(0 0, 100% 50%, 0 100%); }
.slide input { appearance: none; flex: 1; min-width: 0; height: 15px; background: #fff; }
.slide input::-webkit-slider-thumb { appearance: none; width: 6px; height: 15px; border-right: 1px solid #6f6f6f; box-shadow: inset -1px 0 #b0b0b0; background: #f0f0f0; }
.slide .fat::-webkit-slider-thumb { width: 14px; }
.slope { height: 35px; padding-top: 4px; line-height: 14px; color: #e019e0; }
.state { line-height: 18px; text-align: right; color: #118511; font-weight: bold; font-size: 10px; }
.under { display: grid; height: 26px; align-items: center; }
.under > * { grid-area: 1 / 1; }
.under label { display: flex; align-items: center; gap: 9px; font-weight: bold; justify-self: start; }
.under strong { justify-self: center; padding-left: 27px; }
.under input { appearance: none; width: 10px; height: 10px; border: 1px solid; border-color: #777 #e4e4e4 #e4e4e4 #777; background: #fff; }
.under input:checked::after { content: ""; display: block; width: 8px; height: 8px; background: #000; clip-path: polygon(10% 40%, 40% 65%, 90% 10%, 90% 40%, 40% 95%, 10% 70%); }
.note { font-weight: bold; line-height: 26px; color: #118511; white-space: nowrap; }
.alert { color: #f01010; }
.panel-body hr { grid-column: 1 / -1; width: auto; margin: 7px -7px 17px -8px; border: 0; border-top: 1px solid #8d8d8d; border-bottom: 1px solid #fff; }
.picks { display: flex; gap: 12px; padding-top: 1px; }
.combo { position: relative; width: 96px; height: 17px; border: solid; border-width: 2px 1px 1px 2px; border-color: #777 #aaa #aaa #777; background: #fff; }
.combo.long { width: 109px; }
.combo select { appearance: none; display: block; width: calc(100% - 14px); height: 14px; padding: 0 1px; border: 0; background: #fff; font-weight: bold; line-height: 14px; }
.combo::after { content: ""; position: absolute; right: 0; top: 0; width: 14px; height: 14px; background: #000; clip-path: polygon(4px 5px, 10px 5px, 7px 9px); }
.combo::before { content: ""; position: absolute; right: 0; top: 0; width: 14px; height: 14px; border: 1px solid; border-color: #fff #777 #777 #fff; background: #f0f0f0; }
.combo.on { border-color: #b08a63 #aaa #aaa #b08a63; }
.combo.on select { background: #3797f5; color: #fff; border: 1px solid #444; padding: 0; line-height: 12px; }
.acts { display: grid; grid-template-columns: 1fr 1fr; gap: 8px; height: 21px; }
```
